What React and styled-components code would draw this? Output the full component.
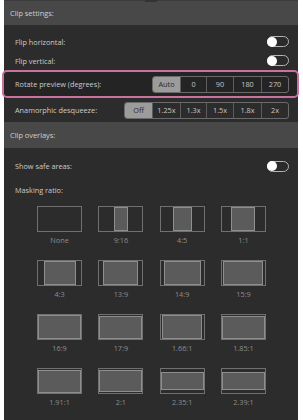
import React from 'react'
import styled, { createGlobalStyle } from 'styled-components'

const GlobalStyle = createGlobalStyle`
  html, body {
    margin: 0;
    padding: 0;
    background: #ffffff;
  }
  body {
    font-family: "Open Sans", "Noto Sans", sans-serif;
    -webkit-font-smoothing: antialiased;
  }
`

const Panel = styled.div`
  width: 294px;
  height: 420px;
  margin-left: 4px;
  background: #2c2c2c;
  display: flex;
  flex-direction: column;
`

const SectionHeader = styled.div`
  position: relative;
  height: ${props => props.tall || 26}px;
  box-sizing: border-box;
  background: #484848;
  color: #cfcfcf;
  font-size: 7.4px;
  display: flex;
  align-items: center;
  padding-left: 6px;
  ${props => props.top && `
    border-top: 1px solid #3c3c3c;
    &:before {
      content: '';
      position: absolute;
      left: 141px;
      top: -1px;
      width: 12px;
      height: 2px;
      background: #333;
    }
  `}
`

const Body = styled.div`
  display: flex;
  flex-direction: column;
  padding-top: ${props => props.pad || 0}px;
`

const Row = styled.div`
  height: ${props => props.h || 19}px;
  display: flex;
  align-items: center;
  justify-content: space-between;
  padding: 0 9px 0 11px;
  color: #cbcbcb;
  font-size: 7.3px;
`

const Highlight = styled.div`
  margin: 0 -1px 0 -2px;
  height: 28px;
  box-sizing: border-box;
  border: 2px solid #c8739d;
  border-radius: 5px;
  background: #242424;
  display: flex;
  align-items: center;
  justify-content: space-between;
  padding: 0 8px 0 11px;
  color: #cbcbcb;
  font-size: 7.3px;
`

const Toggle = styled.div`
  width: 22px;
  height: 11px;
  box-sizing: border-box;
  border: 1px solid #b4b4b4;
  border-radius: 6px;
  background: #2a2a2a;
  display: flex;
  align-items: center;

  &:after {
    content: '';
    width: 10px;
    height: 10px;
    margin-left: -1px;
    border-radius: 50%;
    background: #ffffff;
  }
`

const Segments = styled.div`
  display: flex;
  height: ${props => props.h}px;
  box-sizing: border-box;
  border: 1px solid #6a6a6a;
  border-radius: 3px;
  overflow: hidden;
`

const Segment = styled.div`
  width: ${props => props.w}px;
  display: flex;
  align-items: center;
  justify-content: center;
  font-size: 7.3px;
  color: ${props => (props.active ? '#2a2a2a' : '#c6c6c6')};
  background: ${props => (props.active ? '#9c9c9c' : 'transparent')};
  & + & {
    border-left: 1px solid #5c5c5c;
  }
`

const Grid = styled.div`
  display: grid;
  grid-template-columns: repeat(4, 61.3px);
  justify-content: center;
  row-gap: 15px;
  padding-top: 3px;
  margin-left: 1px;
`

const Cell = styled.div`
  display: flex;
  flex-direction: column;
  align-items: center;
  gap: 3px;
`

const Frame = styled.div`
  width: 45px;
  height: 26px;
  box-sizing: border-box;
  border: 1px solid #707070;
  display: flex;
  align-items: center;
  justify-content: center;
`

const Inner = styled.div`
  box-sizing: border-box;
  background: #5b5b5b;
  border: 1px solid #8e8e8e;
`

const Caption = styled.div`
  font-size: 7.3px;
  color: #8c8c8c;
  height: 10px;
  line-height: 10px;
`

const ratios = [
  ['None', null],
  ['9:16', 9 / 16],
  ['4:5', 4 / 5],
  ['1:1', 1],
  ['4:3', 4 / 3],
  ['13:9', 13 / 9],
  ['14:9', 14 / 9],
  ['15:9', 15 / 9],
  ['16:9', 16 / 9],
  ['17:9', 17 / 9],
  ['1.66:1', 1.66],
  ['1.85:1', 1.85],
  ['1.91:1', 1.91],
  ['2:1', 2],
  ['2.35:1', 2.35],
  ['2.39:1', 2.39]
]

const innerSize = (r) => {
  const w = 43
  const h = 24
  if (r === null) return null
  if (Math.abs(r - 16 / 9) < 0.001) return { width: w, height: h }
  if (r < w / h) return { width: Math.round(h * r), height: h }
  return { width: w, height: Math.round(w / r) }
}

export default function App () {
  return (
    <>
      <GlobalStyle />
      <Panel>
        <SectionHeader top tall={25}>Clip settings:</SectionHeader>
        <Body pad={7}>
          <Row>
            <span>Flip horizontal:</span>
            <Toggle />
          </Row>
          <Row>
            <span>Flip vertical:</span>
            <Toggle />
          </Row>
          <Highlight>
            <span>Rotate preview (degrees):</span>
            <Segments h={17}>
              <Segment w={27} active>Auto</Segment>
              <Segment w={25}>0</Segment>
              <Segment w={26}>90</Segment>
              <Segment w={27}>180</Segment>
              <Segment w={26}>270</Segment>
            </Segments>
          </Highlight>
          <Row h={24}>
            <span>Anamorphic desqueeze:</span>
            <Segments h={17}>
              <Segment w={27} active>Off</Segment>
              <Segment w={27}>1.25x</Segment>
              <Segment w={25}>1.3x</Segment>
              <Segment w={26}>1.5x</Segment>
              <Segment w={27}>1.8x</Segment>
              <Segment w={26}>2x</Segment>
            </Segments>
          </Row>
        </Body>
        <SectionHeader>Clip overlays:</SectionHeader>
        <Body pad={8}>
          <Row h={20}>
            <span>Show safe areas:</span>
            <Toggle />
          </Row>
          <Row h={27}>
            <span>Masking ratio:</span>
          </Row>
          <Grid>
            {ratios.map(([label, r]) => {
              const size = innerSize(r)
              return (
                <Cell key={label}>
                  <Frame>
                    {size && <Inner style={size} />}
                  </Frame>
                  <Caption>{label}</Caption>
                </Cell>
              )
            })}
          </Grid>
        </Body>
      </Panel>
    </>
  )
}
